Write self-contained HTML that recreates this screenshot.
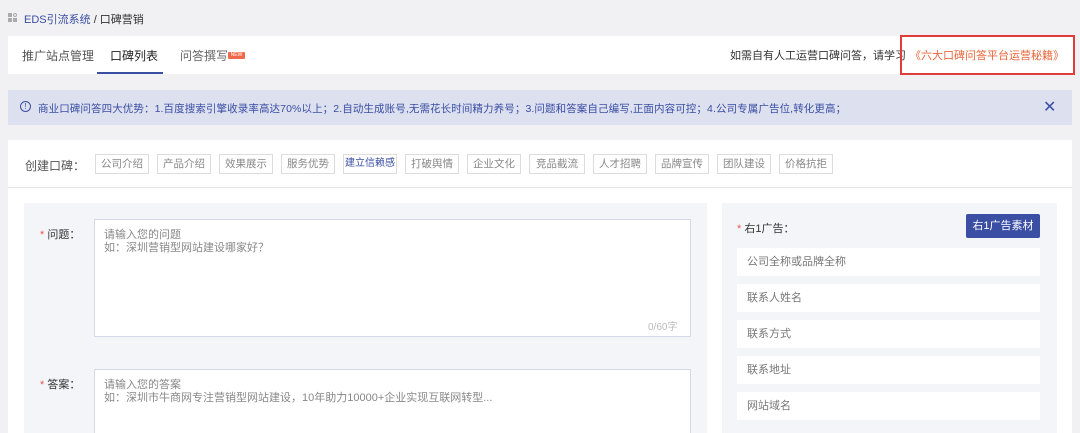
<!DOCTYPE html>
<html><head><meta charset="utf-8"><style>
*{margin:0;padding:0;box-sizing:border-box}
body{width:1080px;height:433px;overflow:hidden;background:#f1f1f3;font-family:"Liberation Sans","Noto Sans CJK SC",sans-serif;font-size:12px;color:#333;position:relative}
.abs{position:absolute;white-space:nowrap}
.tag{position:absolute;top:154px;height:20px;border:1px solid #ddd;color:#888;font-size:10.5px;line-height:18px;text-align:center;background:#fff;white-space:nowrap;overflow:hidden}
.inp{position:absolute;left:737px;width:303px;height:28px;background:#fff;color:#777;font-size:11px;line-height:28px;padding-left:10px}
</style></head><body>
<div class="abs" style="left:8px;top:13px;width:10px;height:10px;">
<div class="abs" style="left:0;top:0;width:4px;height:4px;background:#aaa"></div>
<div class="abs" style="left:5px;top:0;width:4px;height:4px;border:1px solid #aaa;border-radius:50%"></div>
<div class="abs" style="left:0;top:5px;width:4px;height:4px;background:#aaa"></div>
<div class="abs" style="left:5px;top:5px;width:4px;height:4px;background:#aaa"></div>
</div>
<div class="abs" style="left:24px;top:11px;font-size:11px;color:#3a4ea3">EDS引流系统 <span style="color:#333">/ 口碑营销</span></div>

<div class="abs" style="left:8px;top:36px;width:1067px;height:38px;background:#fff"></div>
<div class="abs" style="left:22px;top:47px;font-size:12px;color:#555">推广站点管理</div>
<div class="abs" style="left:110px;top:47px;font-size:12px;color:#222">口碑列表</div>
<div class="abs" style="left:97px;top:72px;width:66px;height:2px;background:#3a4ea3"></div>
<div class="abs" style="left:180px;top:47px;font-size:12px;color:#666">问答撰写</div>
<div class="abs" style="left:228px;top:52px;width:17px;height:7px;background:#f06a4a;border-radius:1px;font-size:5px;color:#fff;line-height:7px;text-align:center">NEW</div>
<div class="abs" style="left:730px;top:47px;font-size:11px;color:#333">如需自有人工运营口碑问答，请学习</div>
<div class="abs" style="left:900px;top:35px;width:175px;height:40px;border:2px solid #e03c3c"></div>
<div class="abs" style="left:910px;top:47px;font-size:11px;color:#e9663b">《六大口碑问答平台运营秘籍》</div>

<div class="abs" style="left:8px;top:90px;width:1064px;height:35px;background:#dde0ef"></div>
<div class="abs" style="left:20px;top:101px;width:11px;height:11px;border:1px solid #3a4ea3;border-radius:50%;font-size:8px;line-height:9px;text-align:center;color:#3a4ea3">!</div>
<div class="abs" style="left:38px;top:101px;font-size:10.5px;color:#3a4ea3;letter-spacing:0.1px">商业口碑问答四大优势：1.百度搜索引擎收录率高达70%以上；2.自动生成账号,无需花长时间精力养号；3.问题和答案自己编写,正面内容可控；4.公司专属广告位,转化更高；</div>
<div class="abs" style="left:1043px;top:97px;font-size:16px;color:#3a4ea3">✕</div>

<div class="abs" style="left:8px;top:140px;width:1064px;height:293px;background:#fff"></div>
<div class="abs" style="left:8px;top:187px;width:1064px;height:1px;background:#e6e6e6"></div>
<div class="abs" style="left:25px;top:157px;font-size:12px;color:#555">创建口碑：</div>
<div class="tag" style="left:95px;width:54px">公司介绍</div>
<div class="tag" style="left:157px;width:54px">产品介绍</div>
<div class="tag" style="left:219px;width:54px">效果展示</div>
<div class="tag" style="left:281px;width:54px">服务优势</div>
<div class="tag" style="left:343px;width:54px;color:#3a4ea3;font-size:10px">建立信赖感</div>
<div class="tag" style="left:405px;width:54px">打破舆情</div>
<div class="tag" style="left:467px;width:54px">企业文化</div>
<div class="tag" style="left:529px;width:56px">竞品截流</div>
<div class="tag" style="left:593px;width:54px">人才招聘</div>
<div class="tag" style="left:655px;width:54px">品牌宣传</div>
<div class="tag" style="left:717px;width:54px">团队建设</div>
<div class="tag" style="left:779px;width:54px">价格抗拒</div>

<div class="abs" style="left:24px;top:203px;width:683px;height:230px;background:#f4f5f8"></div>
<div class="abs" style="left:40px;top:226px;font-size:11px;color:#333"><span style="color:#e55">*</span> 问题：</div>
<div class="abs" style="left:94px;top:219px;width:597px;height:118px;background:#fff;border:1px solid #d5d8e6"></div>
<div class="abs" style="left:104px;top:229px;font-size:11px;color:#888;line-height:13px">请输入您的问题<br>如：深圳营销型网站建设哪家好？</div>
<div class="abs" style="left:648px;top:318px;font-size:10px;color:#bbb">0/60字</div>
<div class="abs" style="left:40px;top:376px;font-size:11px;color:#333"><span style="color:#e55">*</span> 答案：</div>
<div class="abs" style="left:94px;top:369px;width:597px;height:64px;background:#fff;border:1px solid #d5d8e6;border-bottom:none"></div>
<div class="abs" style="left:104px;top:379px;font-size:11px;color:#888;line-height:13px">请输入您的答案<br>如：深圳市牛商网专注营销型网站建设，10年助力10000+企业实现互联网转型...</div>

<div class="abs" style="left:722px;top:203px;width:335px;height:230px;background:#f4f5f8"></div>
<div class="abs" style="left:737px;top:220px;font-size:11px;color:#333"><span style="color:#e55">*</span> 右1广告：</div>
<div class="abs" style="left:966px;top:214px;width:74px;height:24px;background:#3a4ea3;border-radius:2px;color:#fff;font-size:11px;line-height:24px;text-align:center">右1广告素材</div>
<div class="inp" style="top:248px">公司全称或品牌全称</div>
<div class="inp" style="top:284px">联系人姓名</div>
<div class="inp" style="top:320px">联系方式</div>
<div class="inp" style="top:356px">联系地址</div>
<div class="inp" style="top:392px">网站域名</div>
</body></html>
